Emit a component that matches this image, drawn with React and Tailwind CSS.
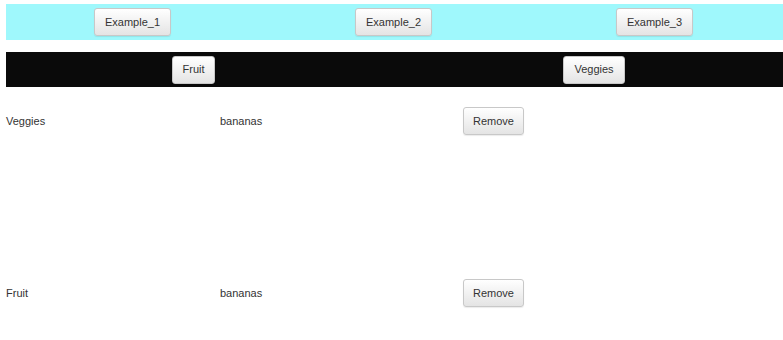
import React from "react";

function Btn({ children, w }) {
  return (
    <button className={`${w} h-[28px] px-0 text-center rounded-[3px] border border-[#c8c8c8] bg-gradient-to-b from-[#ffffff] to-[#e4e4e4] text-[11px] text-[#333] leading-none shadow-[0_1px_1px_rgba(0,0,0,0.08)]`}>
      {children}
    </button>
  );
}

export default function App() {
  return (
    <div className="w-[783px] h-[340px] bg-white overflow-hidden pl-[6px] pt-[4px] font-['Liberation_Sans',Arial,sans-serif] text-[11px] text-[#333]">
      <div className="h-[36px] bg-[#9ff8fc] flex items-center pl-[88px] gap-[184px]">
        <Btn w="w-[77px]">Example_1</Btn>
        <Btn w="w-[77px]">Example_2</Btn>
        <Btn w="w-[77px]">Example_3</Btn>
      </div>
      <div className="mt-[12px] h-[35px] bg-[#0a0a0a] flex items-center pl-[166px] gap-[348px]">
        <Btn w="w-[43px]">Fruit</Btn>
        <Btn w="w-[62px]">Veggies</Btn>
      </div>
      <div className="mt-[20px] grid grid-cols-[214px_243px_1fr] items-center h-[28px]">
        <span>Veggies</span>
        <span>bananas</span>
        <div><Btn w="w-[61px]">Remove</Btn></div>
      </div>
      <div className="mt-[144px] grid grid-cols-[214px_243px_1fr] items-center h-[28px]">
        <span>Fruit</span>
        <span>bananas</span>
        <div><Btn w="w-[61px]">Remove</Btn></div>
      </div>
    </div>
  );
}
